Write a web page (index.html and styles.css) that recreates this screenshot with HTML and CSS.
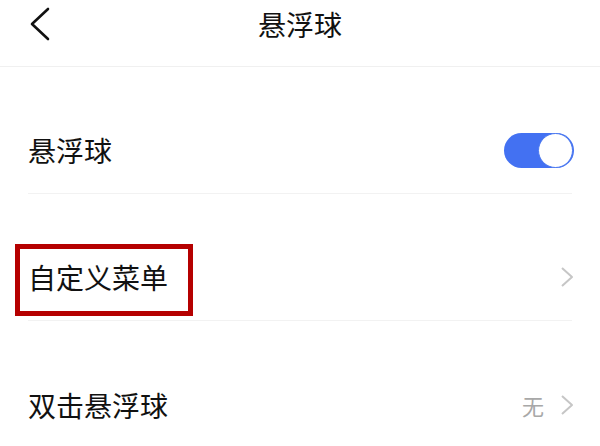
FILE: index.html
```html
<!DOCTYPE html>
<html>
    <head>
        <title>悬浮球</title>
        <meta charset="UTF-8">
        <meta name="viewport" content="width=device-width">
        <link rel="stylesheet" href="styles.css">
    </head>
    <body>
        <header class="topbar">
            <a class="back" href="#">
                <svg width="24" height="36" viewBox="0 0 24 36">
                    <path d="M20 3 L4 18 L20 33" fill="none" stroke="#111" stroke-width="2.6" stroke-linecap="round" stroke-linejoin="round"/>
                </svg>
            </a>
            <h1 class="title">悬浮球</h1>
        </header>

        <ul class="settings">
            <li class="item">
                <span class="label">悬浮球</span>
                <span class="switch on"><span class="knob"></span></span>
            </li>
            <li class="item">
                <span class="label marked">自定义菜单</span>
                <span class="more">
                    <svg class="arrow" width="14" height="22" viewBox="0 0 14 22">
                        <path d="M2 2 L12 11 L2 20" fill="none" stroke="#c6c6c6" stroke-width="2" stroke-linejoin="round"/>
                    </svg>
                </span>
            </li>
            <li class="item last">
                <span class="label">双击悬浮球</span>
                <span class="more">
                    <span class="value">无</span>
                    <svg class="arrow" width="14" height="22" viewBox="0 0 14 22">
                        <path d="M2 2 L12 11 L2 20" fill="none" stroke="#c6c6c6" stroke-width="2" stroke-linejoin="round"/>
                    </svg>
                </span>
            </li>
        </ul>
    </body>
</html>
```

FILE: styles.css
```css
body
{
    margin: 0;
    background: #ffffff;
    font-family: "Noto Sans CJK SC", "Noto Sans", sans-serif;
    color: #111111;
}
.topbar
{
    position: relative;
    height: 67px;
    padding-top: 4px;
    box-sizing: border-box;
    border-bottom: 1px solid #f0f0f0;
}
.back
{
    position: absolute;
    left: 28px;
    top: 6px;
    display: block;
}
.title
{
    margin: 0;
    text-align: center;
    font-size: 28px;
    font-weight: 400;
    line-height: 40px;
}
.settings
{
    margin: 0;
    padding: 0 28px;
}
.item
{
    list-style: none;
    display: flex;
    align-items: center;
    justify-content: space-between;
    height: 127px;
    padding-top: 63px;
    padding-bottom: 23px;
    box-sizing: border-box;
    border-bottom: 1px solid #f2f2f2;
}
.item.last
{
    border-bottom: none;
}
.label
{
    font-size: 28px;
    line-height: 40px;
}
.marked
{
    position: relative;
}
.marked::after
{
    content: "";
    position: absolute;
    left: -13px;
    right: -25px;
    top: -13px;
    bottom: -19px;
    border: 5px solid #b50000;
}
.switch
{
    position: relative;
    width: 70px;
    height: 35px;
    margin-right: -2px;
    border-radius: 18px;
    background: #4371f2;
}
.knob
{
    position: absolute;
    right: 1px;
    top: 0;
    width: 33px;
    height: 33px;
    border-radius: 50%;
    background: #ffffff;
    border: 1px solid #4a78f0;
}
.more
{
    display: flex;
    align-items: center;
}
.value
{
    font-size: 22px;
    color: #a8a8a8;
    margin-right: 16px;
}
.arrow
{
    display: block;
    margin-right: -2px;
}
```
